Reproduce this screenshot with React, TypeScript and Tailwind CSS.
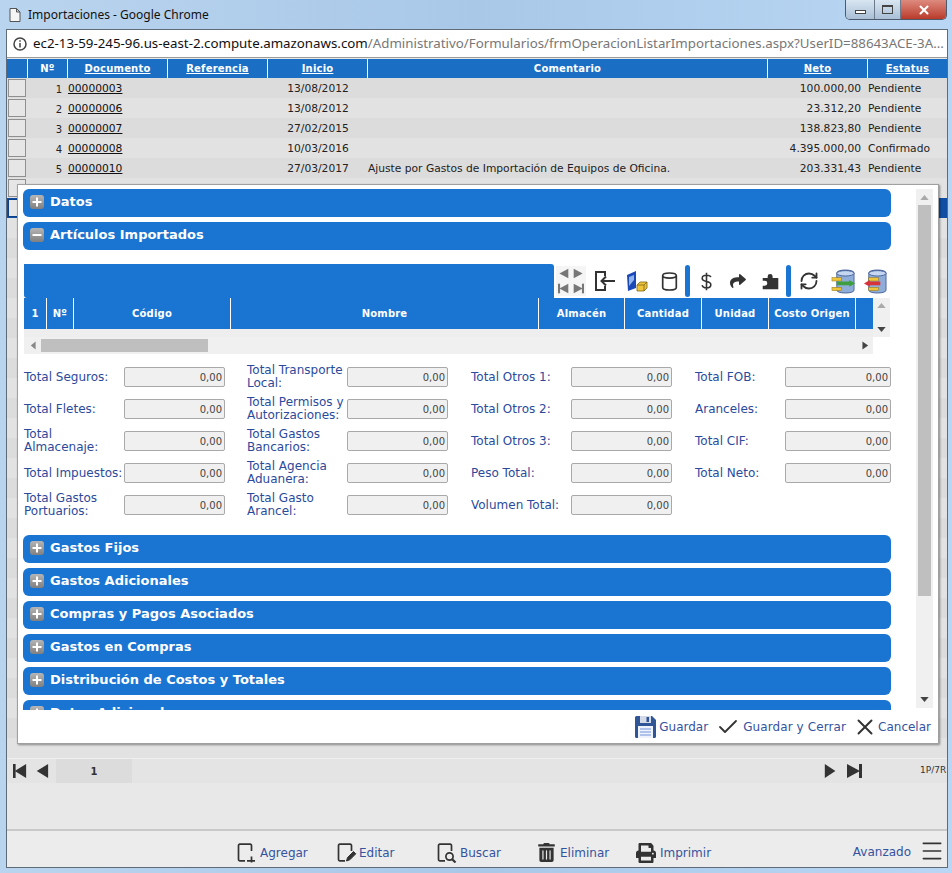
import { Check, Menu, RefreshCw, X } from 'lucide-react';
import { FaPrint, FaShare, FaTrashAlt } from 'react-icons/fa';

const FONT = 'font-["DejaVu_Sans",Verdana,sans-serif]';

const COLUMNS = [
    { label: 'Nº', link: false },
    { label: 'Documento', link: true },
    { label: 'Referencia', link: true },
    { label: 'Inicio', link: true },
    { label: 'Comentario', link: false },
    { label: 'Neto', link: true },
    { label: 'Estatus', link: true },
];

const ROWS = [
    { n: 1, doc: '00000003', date: '13/08/2012', note: '', net: '100.000,00', status: 'Pendiente' },
    { n: 2, doc: '00000006', date: '13/08/2012', note: '', net: '23.312,20', status: 'Pendiente' },
    { n: 3, doc: '00000007', date: '27/02/2015', note: '', net: '138.823,80', status: 'Pendiente' },
    { n: 4, doc: '00000008', date: '10/03/2016', note: '', net: '4.395.000,00', status: 'Confirmado' },
    { n: 5, doc: '00000010', date: '27/03/2017', note: 'Ajuste por Gastos de Importación de Equipos de Oficina.', net: '203.331,43', status: 'Pendiente' },
];

const FIELD_COLUMNS = [
    ['Total Seguros:', 'Total Fletes:', 'Total Almacenaje:', 'Total Impuestos:', 'Total Gastos Portuarios:'],
    ['Total Transporte Local:', 'Total Permisos y Autorizaciones:', 'Total Gastos Bancarios:', 'Total Agencia Aduanera:', 'Total Gasto Arancel:'],
    ['Total Otros 1:', 'Total Otros 2:', 'Total Otros 3:', 'Peso Total:', 'Volumen Total:'],
    ['Total FOB:', 'Aranceles:', 'Total CIF:', 'Total Neto:'],
];

const GRID_COLUMNS = [
    { label: '1', w: 'w-[23px]' },
    { label: 'Nº', w: 'w-[27px]' },
    { label: 'Código', w: 'w-[157px]' },
    { label: 'Nombre', w: 'w-[308px]' },
    { label: 'Almacén', w: 'w-[86px]' },
    { label: 'Cantidad', w: 'w-[77px]' },
    { label: 'Unidad', w: 'w-[67px]' },
    { label: 'Costo Origen', w: 'w-[87px]' },
    { label: '', w: 'flex-1' },
];

function Tri({ dir, bar, className }: { dir: 'l' | 'r'; bar?: boolean; className: string }) {
    return (
        <svg viewBox="0 0 16 16" preserveAspectRatio="none" className={className} fill="currentColor">
            {dir === 'r' ? <path d="M1 1l13 7-13 7z" /> : <path d="M15 1L2 8l13 7z" />}
            {bar && (dir === 'r' ? <rect x="13" y="1" width="3" height="14" /> : <rect x="0" y="1" width="3" height="14" />)}
        </svg>
    );
}

function DbArrow({ color, left }: { color: string; left?: boolean }) {
    return (
        <svg viewBox="0 0 26 26" className="w-[25px] h-[25px]">
            <path d="M6 4c0-4 18-4 18 0v18c0 4-18 4-18 0z" fill="#8fadd9" stroke="#33508a" strokeWidth="0.8" />
            <ellipse cx="15" cy="4.5" rx="9" ry="2.8" fill="#c5d6f0" stroke="#33508a" strokeWidth="0.8" />
            <rect x={left ? 6 : 1} y="9" width="10" height="3.5" fill="#eec53a" stroke="#8a6d12" strokeWidth="0.5" />
            <rect x={left ? 6 : 1} y="19" width="10" height="3.5" fill="#eec53a" stroke="#8a6d12" strokeWidth="0.5" />
            {left ? (
                <path d="M1 15l6-3.5V13h11v4H7v1.5z" fill={color} />
            ) : (
                <path d="M25 15l-6-3.5V13H6v4h13v1.5z" fill={color} />
            )}
        </svg>
    );
}

function PageIcon({ kind }: { kind: 'add' | 'edit' | 'search' }) {
    return (
        <svg viewBox="0 0 20 20" className="w-5 h-5 text-[#333]" fill="none" stroke="currentColor" strokeWidth="1.7">
            <path d="M14.5 8V2.5a1.3 1.3 0 0 0-1.3-1.3H2.8a1.3 1.3 0 0 0-1.3 1.3v14a1.3 1.3 0 0 0 1.3 1.3H8" />
            {kind === 'add' && <path d="M10 17.8h8M14.5 13.5v6" />}
            {kind === 'edit' && <path d="M9.5 18l1-3.5 6-6 2.3 2.3-6 6z" fill="currentColor" strokeWidth="1" />}
            {kind === 'search' && (
                <>
                    <circle cx="12.5" cy="13.5" r="3.6" />
                    <path d="M15.2 16.2l3.3 3.3" strokeWidth="2.2" />
                </>
            )}
        </svg>
    );
}

function AccordionBar({ title, open }: { title: string; open?: boolean }) {
    return (
        <div className="h-[28px] shrink-0 rounded-[6px] bg-[#1a75d2] flex items-start pt-[5px] pl-[7px]">
            <span className="w-[14px] h-[14px] mt-[1px] rounded-[3px] bg-gradient-to-b from-[#b5b5b5] to-[#808080] flex items-center justify-center text-white">
                <svg viewBox="0 0 10 10" className="w-[10px] h-[10px]" fill="currentColor">
                    <rect x="0.5" y="4" width="9" height="2" />
                    {!open && <rect x="4" y="0.5" width="2" height="9" />}
                </svg>
            </span>
            <span className="ml-[6px] text-[13px] leading-[16px] font-bold text-white">{title}</span>
        </div>
    );
}

function Field({ label, last }: { label: string; last: boolean }) {
    return (
        <div className="h-[32px] flex items-center">
            <span className={`${last ? 'w-[90px]' : 'w-[100px]'} text-[12px] leading-[13px] text-[#2b4a9c]`}>{label}</span>
            <span className={`${last ? 'w-[106px]' : 'w-[101px]'} h-[20px] rounded-[2px] border border-[#a9a9a9] bg-[#f0f0f0] text-[10px] leading-[19px] text-right pr-[2px] text-[#444]`}>
                0,00
            </span>
        </div>
    );
}

export default function App() {
    const stripes = Array.from({ length: 34 }, (_, i) => i);

    return (
        <div className={`${FONT} relative w-[952px] h-[873px] overflow-hidden flex flex-col bg-gradient-to-r from-[#b9d4ee] via-[#a9c8e8] to-[#b9d7f4]`}>
            {/* Chrome title bar */}
            <div className="h-[29px] shrink-0 flex items-start font-['Noto_Sans',sans-serif]">
                <svg viewBox="0 0 12 14" className="w-[12px] h-[14px] ml-[9px] mt-[8px] text-[#555]" fill="#f5f5f5" stroke="currentColor">
                    <path d="M1 .5h6.5L11 4v9.5H1zM7.5 .5V4H11" />
                </svg>
                <span className="ml-[7px] mt-[6px] text-[12px] leading-[18px] text-[#111] whitespace-nowrap">Importaciones - Google Chrome</span>
                <div className="ml-auto mr-[5px] w-[102px] h-[20px] flex rounded-b-[5px] overflow-hidden border border-t-0 border-[#4d5a6b]">
                    <span className="w-[28px] bg-gradient-to-b from-[#d9e6f2] to-[#a9bfd6] flex items-center justify-center">
                        <span className="w-[11px] h-[4px] mt-[5px] border border-[#444] bg-white" />
                    </span>
                    <span className="w-[27px] border-x border-[#6c7a8c] bg-gradient-to-b from-[#d9e6f2] to-[#a9bfd6] flex items-center justify-center">
                        <span className="w-[11px] h-[9px] border border-[#444] border-t-2" />
                    </span>
                    <span className="flex-1 bg-gradient-to-b from-[#dd8a7e] to-[#b8392a] flex items-center justify-center text-white">
                        <X size={14} strokeWidth={3.5} />
                    </span>
                </div>
            </div>

            <div className="ml-[6px] w-[942px] h-[839px] border border-[#5f6b78] flex flex-col bg-[#e8e8e8]">
                {/* Address bar */}
                <div className="h-[28px] shrink-0 bg-white flex items-center pl-[6px] border-b border-[#9a9a9a] font-['Noto_Sans',sans-serif]">
                    <svg viewBox="0 0 14 14" className="w-[14px] h-[14px] shrink-0 text-[#444]" fill="none" stroke="currentColor" strokeWidth="1.5">
                        <circle cx="7" cy="7" r="6" />
                        <path d="M7 6v4.5M7 3.2v1.6" />
                    </svg>
                    <span className="ml-[6px] text-[13.3px] text-[#111] whitespace-nowrap">
                        ec2-13-59-245-96.us-east-2.compute.amazonaws.com
                        <span className="text-[#777]">/Administrativo/Formularios/frmOperacionListarImportaciones.aspx?UserID=88643ACE-3A...</span>
                    </span>
                </div>

                {/* Records table */}
                <div className="h-[19px] mt-[1px] shrink-0 flex bg-[#1a6fc4] text-white text-[10px] leading-[19px] font-bold tracking-[0.2px]">
                    <span className="w-[20px]" />
                    {COLUMNS.map((c, i) => (
                        <span
                            key={c.label}
                            className={`${i === 4 ? 'w-[400px]' : i === 0 ? 'w-[40px]' : i === 6 ? 'flex-1' : 'w-[100px]'} border-l border-white text-center ${c.link ? 'underline' : ''}`}
                        >
                            {c.label}
                        </span>
                    ))}
                </div>
                <div className="h-[680px] shrink-0 overflow-hidden text-[10.7px] text-[#222]">
                    {stripes.map((i) => {
                        const row = ROWS[i];
                        const selected = i === 6;
                        const bg = selected ? 'bg-[#0f4ea3]' : i % 2 === 0 ? 'bg-[#dcdcdc]' : 'bg-[#e2e2e2]';
                        return (
                            <div key={i} className={`h-[20px] pt-[2px] flex items-center ${bg}`}>
                                {i < 7 && (
                                    <span className={`ml-[1px] -mt-[1px] self-start w-[18px] h-[18px] shrink-0 border ${selected ? 'border-[#0f3f85]' : 'border-[#8f8f8f]'} bg-[#e6e6e6]`} />
                                )}
                                {row && (
                                    <>
                                        <span className="w-[36px] text-right text-[10px] shrink-0">{row.n}</span>
                                        <span className="ml-[6px] w-[200px] shrink-0 underline text-[#111]">{row.doc}</span>
                                        <span className="w-[100px] text-center shrink-0">{row.date}</span>
                                        <span className="w-[393px] shrink-0 whitespace-nowrap">{row.note}</span>
                                        <span className="w-[100px] text-right shrink-0">{row.net}</span>
                                        <span className="ml-[7px] shrink-0">{row.status}</span>
                                    </>
                                )}
                            </div>
                        );
                    })}
                </div>

                {/* Pager */}
                <div className="h-[25px] shrink-0 bg-[#e4e4e4] flex items-center text-[#333] border-t border-[#efefef]">
                    <Tri dir="l" bar className="w-[14px] h-[16px] ml-[6px]" />
                    <Tri dir="l" className="w-[14px] h-[16px] ml-[8px]" />
                    <span className="ml-[7px] w-[76px] h-full bg-[#dcdcdc] text-center text-[10px] leading-[25px] font-bold">1</span>
                    <Tri dir="r" className="w-[13px] h-[16px] ml-[692px]" />
                    <Tri dir="r" bar className="w-[16px] h-[16px] ml-[9px]" />
                    <span className="ml-[58px] text-[9px] whitespace-nowrap">1P/7R</span>
                </div>

                <div className="h-[46px] shrink-0 bg-[#e8e8e8]" />

                {/* Bottom toolbar */}
                <div className="flex-1 bg-[#ececec] border-t-2 border-[#c9c9c9] flex items-center pt-[7px] pl-[230px] text-[12px] text-[#34539f]">
                    <span className="w-[100px] flex items-center gap-[3px]"><PageIcon kind="add" />Agregar</span>
                    <span className="w-[100px] flex items-center gap-[2px]"><PageIcon kind="edit" />Editar</span>
                    <span className="w-[101px] flex items-center gap-[3px]"><PageIcon kind="search" />Buscar</span>
                    <span className="w-[98px] flex items-center gap-[5px]"><FaTrashAlt className="w-[17px] h-[19px] text-[#333]" />Eliminar</span>
                    <span className="flex items-center gap-[4px]"><FaPrint className="w-[20px] h-[20px] text-[#333]" />Imprimir</span>
                    <span className="ml-auto mb-[2px]">Avanzado</span>
                    <Menu className="ml-[8px] mr-[2px] mb-[3px] text-[#333]" size={26} strokeWidth={1.5} />
                </div>
            </div>

            {/* Modal */}
            <div className="absolute left-[17px] top-[184px] w-[922px] h-[560px] bg-white border border-[#a0a0a0] shadow-[1px_1px_2px_rgba(0,0,0,0.4)] flex flex-col">
                <div className="h-[525px] shrink-0 flex overflow-hidden">
                    <div className="ml-[5px] mt-[4px] w-[868px] shrink-0 flex flex-col gap-[5px]">
                        <AccordionBar title="Datos" />
                        <AccordionBar title="Artículos Importados" open />

                        {/* Grid toolbar */}
                        <div className="mt-[9px] h-[34px] shrink-0 flex items-center text-[#333] w-[880px]">
                            <div className="ml-[1px] w-[530px] h-full bg-[#1a75d2] rounded-tr-[3px] rounded-bl-[3px]" />
                            <div className="ml-[2px] w-[30px] h-[30px] bg-[#f5f5f5] grid grid-cols-2 place-items-center text-[#777]">
                                <Tri dir="l" className="w-[11px] h-[11px]" />
                                <Tri dir="r" className="w-[11px] h-[11px]" />
                                <Tri dir="l" bar className="w-[11px] h-[11px]" />
                                <Tri dir="r" bar className="w-[11px] h-[11px]" />
                            </div>
                            <span className="ml-[3px] w-[32px] flex justify-center">
                                <svg viewBox="0 0 22 22" className="w-[22px] h-[22px]" fill="none" stroke="currentColor" strokeWidth="2">
                                    <path d="M11 6V2H2v18h9v-4M21 11H8M12 6.5L7.5 11l4.500 4.500" />
                                </svg>
                            </span>
                            <span className="w-[32px] flex justify-center">
                                <svg viewBox="0 0 24 24" className="w-[24px] h-[24px]">
                                    <path d="M2 6l9-4v17l-8 3z" fill="#1b49b8" />
                                    <path d="M4 8l5-2v5l-5 6z" fill="#8fb4ee" />
                                    <path d="M12 16l3-3h7v6l-3 3h-7z" fill="#eec53a" stroke="#7a6414" strokeWidth="0.8" />
                                    <path d="M12 16h7v6M19 16l3-3" fill="none" stroke="#7a6414" strokeWidth="0.8" />
                                </svg>
                            </span>
                            <span className="w-[32px] flex justify-center">
                                <svg viewBox="0 0 20 24" className="w-[17px] h-[21px]" fill="none" stroke="currentColor" strokeWidth="2">
                                    <path d="M2 5c0-4 16-4 16 0v14c0 4-16 4-16 0zM2 5c0 4 16 4 16 0" />
                                </svg>
                            </span>
                            <span className="w-[5px] h-[32px] rounded-full bg-[#1a75d2]" />
                            <span className="w-[32px] flex justify-center">
                                <svg viewBox="0 0 14 24" className="w-[11px] h-[19px]" fill="none" stroke="currentColor" strokeWidth="2">
                                    <path d="M7 1v22M12.500 6.500C12 4.500 10 4 7 4S1.500 5 1.500 8 4 11.500 7 12s5.500 1.500 5.500 4-2.500 4-5.500 4-5-1-5.500-3.500" />
                                </svg>
                            </span>
                            <span className="w-[32px] flex justify-center"><FaShare className="w-[20px] h-[16px]" /></span>
                            <span className="w-[32px] flex justify-center">
                                <svg viewBox="0 0 24 24" className="w-[17px] h-[17px]" fill="currentColor">
                                    <path d="M1 7h7V5a3.500 3.500 0 1 1 7 0v2h8v16H1v-5h3a3.500 3.500 0 1 0 0-7H1z" />
                                </svg>
                            </span>
                            <span className="w-[5px] h-[32px] rounded-full bg-[#1a75d2]" />
                            <span className="ml-[2px] w-[32px] flex justify-center"><RefreshCw size={20} strokeWidth={2.2} /></span>
                            <span className="ml-[2px] w-[32px] flex justify-center"><DbArrow color="#3f9e3f" /></span>
                            <span className="w-[32px] flex justify-center"><DbArrow color="#d8333a" left /></span>
                        </div>

                        {/* Items grid */}
                        <div className="-mt-[5px] ml-[1px] w-[866px] shrink-0 flex">
                            <div className="w-[849px] shrink-0">
                                <div className="h-[31px] flex bg-[#1a75d2] text-white text-[10px] font-bold leading-[31px] tracking-[0.2px]">
                                    {GRID_COLUMNS.map((c) => (
                                        <span key={c.w + c.label} className={`${c.w} shrink-0 text-center border-r border-white last:border-r-0`}>{c.label}</span>
                                    ))}
                                </div>
                                <div className="h-[8px] bg-[#eeeeee]" />
                                <div className="h-[17px] bg-[#f0f0f0] flex items-center text-[#888]">
                                    <Tri dir="l" className="w-[6px] h-[9px] ml-[6px]" />
                                    <span className="ml-[5px] w-[167px] h-[13px] bg-[#bfbfbf]" />
                                    <Tri dir="r" className="w-[7px] h-[9px] ml-[654px] text-[#444]" />
                                </div>
                            </div>
                            <div className="w-[17px] h-[39px] bg-[#f0f0f0] flex flex-col items-center justify-between py-[5px]">
                                <svg viewBox="0 0 10 6" className="w-[9px] h-[5px] text-[#aaa]" fill="currentColor"><path d="M5 0l5 6H0z" /></svg>
                                <svg viewBox="0 0 10 6" className="w-[9px] h-[5px] text-[#444]" fill="currentColor"><path d="M5 6l5-6H0z" /></svg>
                            </div>
                        </div>

                        {/* Totals */}
                        <div className="ml-[1px] mt-[2px] h-[169px] shrink-0 flex">
                            {FIELD_COLUMNS.map((col, i) => (
                                <div key={i} className={i === 3 ? 'w-[196px]' : i === 0 ? 'w-[223px]' : 'w-[224px]'}>
                                    {col.map((label) => (
                                        <Field key={label} label={label} last={i === 3} />
                                    ))}
                                </div>
                            ))}
                        </div>

                        <AccordionBar title="Gastos Fijos" />
                        <AccordionBar title="Gastos Adicionales" />
                        <AccordionBar title="Compras y Pagos Asociados" />
                        <AccordionBar title="Gastos en Compras" />
                        <AccordionBar title="Distribución de Costos y Totales" />
                        <AccordionBar title="Datos Adicionales" />
                    </div>

                    <div className="ml-[25px] mt-[4px] w-[17px] h-[519px] bg-[#f0f0f0] flex flex-col items-center">
                        <svg viewBox="0 0 10 6" className="w-[9px] h-[5px] mt-[6px] text-[#aaa]" fill="currentColor"><path d="M5 0l5 6H0z" /></svg>
                        <span className="mt-[5px] w-[13px] h-[391px] bg-[#bfbfbf]" />
                        <svg viewBox="0 0 10 6" className="w-[9px] h-[5px] mt-auto mb-[6px] text-[#444]" fill="currentColor"><path d="M5 6l5-6H0z" /></svg>
                    </div>
                </div>

                <div className="flex-1 flex items-center justify-end pr-[7px] pt-[1px] text-[12px] text-[#34539f]">
                    <svg viewBox="0 0 21 22" className="w-[21px] h-[22px]">
                        <path d="M1.500 0H17l4 4v16.500a1.500 1.500 0 0 1-1.500 1.500h-18A1.500 1.500 0 0 1 0 20.500v-19A1.500 1.500 0 0 1 1.500 0z" fill="#2f5597" />
                        <rect x="5" y="0" width="11" height="7" fill="#d5dbe6" />
                        <rect x="11.500" y="1" width="2.500" height="5" fill="#2f5597" />
                        <rect x="3" y="10" width="15" height="12" fill="#eef2fa" />
                        <path d="M5 13h11M5 16h11M5 19h11" stroke="#6f92dc" strokeWidth="1.200" />
                    </svg>
                    <span className="ml-[3px]">Guardar</span>
                    <Check className="ml-[8px] text-[#333]" size={24} strokeWidth={1.8} />
                    <span className="ml-[3px] tracking-[0.1px]">Guardar y Cerrar</span>
                    <X className="ml-[6px] text-[#333]" size={26} strokeWidth={1.8} />
                    <span>Cancelar</span>
                </div>
            </div>
        </div>
    );
}
